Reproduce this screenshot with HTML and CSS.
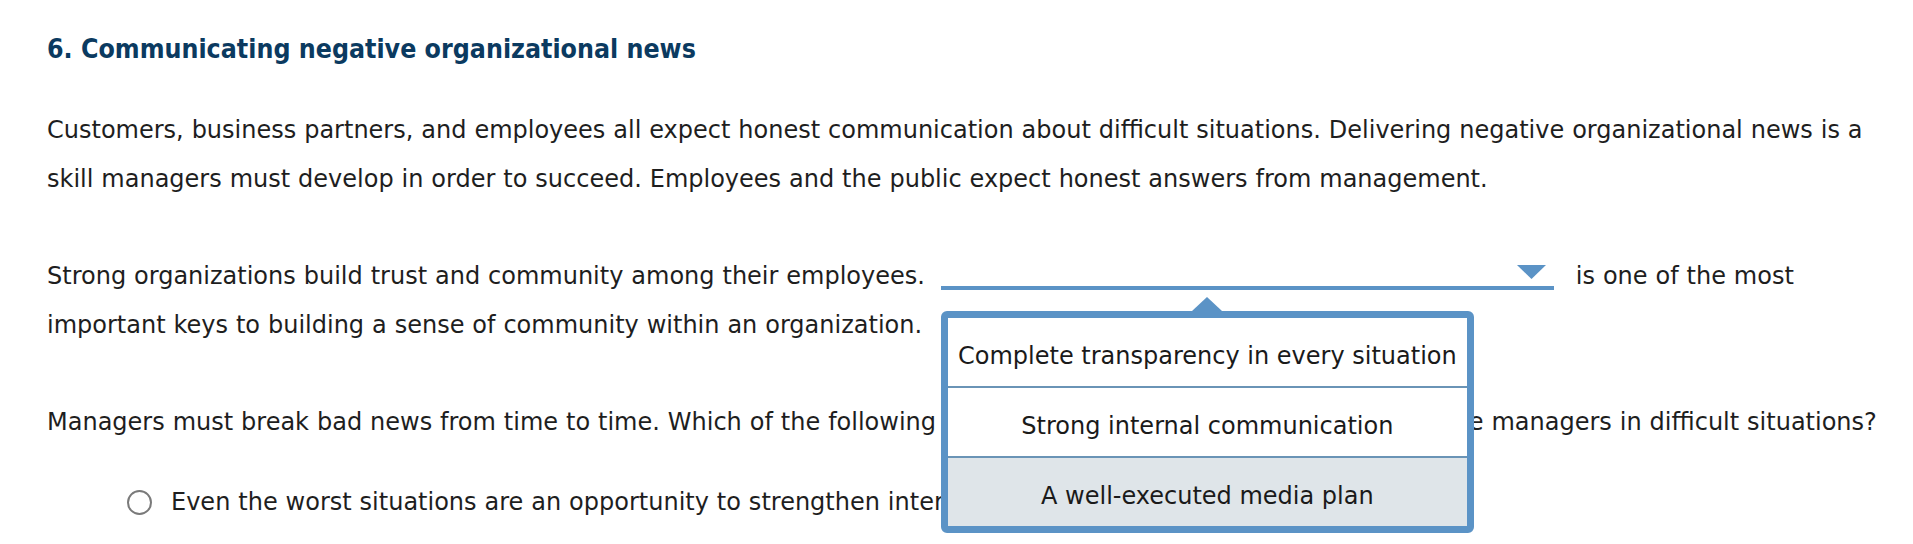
FILE: index.html
```html
<!DOCTYPE html>
<html lang="en">
<head>
<meta charset="utf-8">
<title>Communicating negative organizational news</title>
<link rel="stylesheet" href="styles.css">
</head>
<body>
<main class="page">
  <h2 class="title">6. Communicating negative organizational news</h2>
  <p class="para">Customers, business partners, and employees all expect honest communication about difficult situations. Delivering negative organizational news is a skill managers must develop in order to succeed. Employees and the public expect honest answers from management.</p>
  <p class="para">Strong organizations build trust and community among their employees. <span class="dropdown"><span class="dd-field"><svg class="dd-caret" width="29" height="14" viewBox="0 0 29 14"><polygon points="0,0 29,0 14.5,14" fill="#5b93c6"/></svg></span><span class="dd-menu"><span class="dd-arrow"></span><span class="dd-option">Complete transparency in every situation</span><span class="dd-option">Strong internal communication</span><span class="dd-option dd-option-hover">A well-executed media plan</span></span></span> is one of the most important keys to building a sense of community within an organization.</p>
  <p class="para para-prompt">Managers must break bad news from time to time. Which of the following statements describe the attitude of effective managers in difficult situations?</p>
  <ul class="choices">
    <li class="choice"><span class="radio"></span><span class="choice-text">Even the worst situations are an opportunity to strengthen internal relationships.</span></li>
  </ul>
</main>
</body>
</html>
```

FILE: styles.css
```css
html, body {
  margin: 0;
  padding: 0;
  background: #ffffff;
}

.page {
  box-sizing: border-box;
  min-height: 100vh;
  padding: 29px 0 0 47px;
  font-family: "DejaVu Sans", Verdana, sans-serif;
  font-size: 24px;
  word-spacing: 0.3px;
  color: #1e1e1e;
}

.title {
  margin: 0 0 37px 0;
  font-family: "DejaVu Sans Condensed", "DejaVu Sans", sans-serif;
  font-stretch: semi-condensed;
  font-weight: bold;
  font-size: 26.5px;
  line-height: 40px;
  word-spacing: 0;
  color: #0b3a60;
}

.para {
  margin: 0 0 48px 0;
  line-height: 49px;
}

.para-prompt {
  margin-bottom: 31px;
}

.dropdown {
  position: relative;
  display: inline-block;
  vertical-align: top;
  margin-left: 8px;
  margin-right: 14px;
  word-spacing: 0;
}

.dd-field {
  display: flex;
  justify-content: flex-end;
  align-items: flex-start;
  box-sizing: border-box;
  width: 613px;
  height: 38px;
  padding: 13px 8px 0 0;
  border-bottom: 4px solid #5b93c6;
}

.dd-caret {
  display: block;
}

.dd-menu {
  position: absolute;
  left: 0;
  top: 59px;
  z-index: 5;
  display: flex;
  flex-direction: column;
  box-sizing: border-box;
  width: 533px;
  border: 7px solid #5b93c6;
  border-radius: 6px;
  background: #ffffff;
  line-height: 24px;
}

.dd-arrow {
  position: absolute;
  left: 50%;
  top: -21px;
  margin-left: -15px;
  width: 0;
  height: 0;
  border-left: 15px solid transparent;
  border-right: 15px solid transparent;
  border-bottom: 14px solid #5b93c6;
}

.dd-option {
  display: flex;
  flex: none;
  align-items: center;
  justify-content: center;
  box-sizing: border-box;
  height: 68px;
  padding-top: 8px;
  white-space: nowrap;
  color: #1a1a1a;
  background: #ffffff;
}

.dd-option + .dd-option {
  height: 70px;
  border-top: 2px solid #6a94b6;
}

.dd-option-hover {
  background: #dfe5e9;
}

.choices {
  list-style: none;
  margin: 0;
  padding: 0 0 0 80px;
}

.choice {
  display: flex;
  align-items: center;
  gap: 19px;
  line-height: 49px;
}

.radio {
  flex: none;
  box-sizing: border-box;
  width: 25px;
  height: 25px;
  border: 2px solid #7a7a7a;
  border-radius: 50%;
  background: #ffffff;
}
```
